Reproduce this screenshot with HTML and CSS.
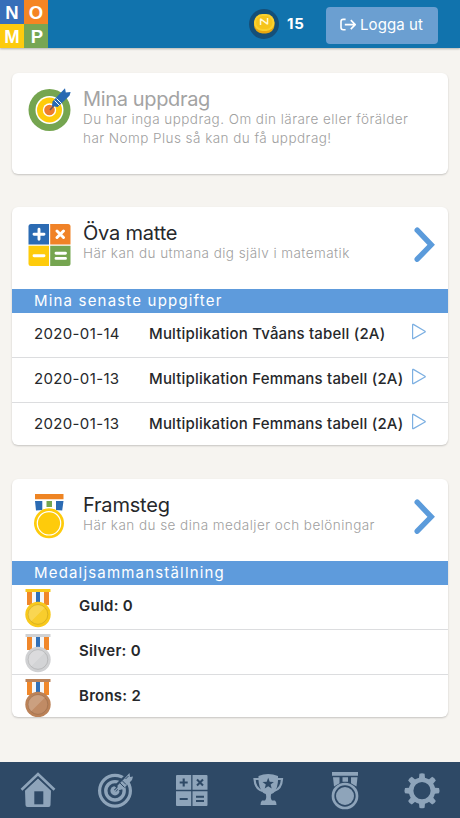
FILE: index.html
```html
<!DOCTYPE html>
<html lang="sv">
<head>
<meta charset="utf-8">
<title>Nomp</title>
<link rel="stylesheet" href="styles.css">
</head>
<body>
<svg width="0" height="0" class="defs">
  <defs>
    <symbol id="chevron" viewBox="0 0 22 36"><path d="M3.2 3.2 17.2 17.8 3.2 32.2" fill="none" stroke="#5b9bdb" stroke-width="5.4" stroke-linecap="round"/></symbol>
    <symbol id="play" viewBox="0 0 16 18"><path d="M1.6 1.8v13.4q0 .8.8.4L14 9.1q.6-.4 0-.8L2.4 1.4q-.8-.4-.8.4z" fill="none" stroke="#7db0e2" stroke-width="1.2"/></symbol>
    <symbol id="medal" viewBox="0 0 28 40">
      <path d="M3 4h7v13H3zM18 4h7v13h-7z" fill="#f0872a"/>
      <path d="M8 4h12v13H8z" fill="#f4f6f8"/>
      <path d="M12 4h4v12h-4z" fill="#2f6fb7"/>
      <path d="M1.500 1h25v3h-25z" fill="currentColor"/>
      <circle cx="14" cy="26.500" r="12.700" fill="currentColor"/>
      <circle cx="14" cy="26.500" r="9.800" fill="#fff" fill-opacity=".08" stroke="#000" stroke-opacity=".12"/>
      <path d="M7 33.500A9.800 9.800 0 0 1 21 19.600z" fill="#fff" fill-opacity=".18"/>
    </symbol>
  </defs>
</svg>
<div class="app">
  <header class="topbar">
    <div class="logo"><span class="blue">N</span><span class="orange">O</span><span class="yellow">M</span><span class="green">P</span></div>
    <svg class="coin" viewBox="0 0 32 32"><circle cx="16" cy="16" r="15" fill="#154f78"/><rect x="6" y="7" width="20.5" height="18.5" rx="8.5" fill="#e9a70f"/><rect x="6" y="6" width="20.5" height="17" rx="8.3" fill="#fbd12e"/><rect x="8" y="8" width="16.5" height="13" rx="6.5" fill="#f6c41b"/><path d="M12.500 17v-6.200l7 5.400V10" fill="none" stroke="#fff8d2" stroke-width="1.500" stroke-linejoin="bevel"/></svg>
    <span class="coins">15</span>
    <button class="logout"><svg viewBox="0 0 16 14"><path d="M5.6 1.4H3.2Q1 1.400 1 3.600v6q0 2.200 2.200 2.200h2.400M4.800 6.600H15M10.800 2.100 15.200 6.600l-4.400 4.500" fill="none" stroke="#fff" stroke-width="1.600"/></svg><span>Logga ut</span></button>
  </header>

  <main>
    <section class="card tasks">
      <div class="head">
        <svg class="icon" viewBox="0 0 44 44"><circle cx="21.500" cy="23" r="21" fill="#75a550"/><circle cx="21.500" cy="23" r="14" fill="#fff"/><circle cx="21.500" cy="23" r="12.500" fill="#fecb0b"/><circle cx="21.500" cy="23" r="6.700" fill="#fff"/><circle cx="21.500" cy="23" r="5.300" fill="#ee7d2b"/><path d="m22 23 7-8" stroke="#6d5660" stroke-width="1.500"/><path d="m24 19 .5-4.500L32 6.500l5-5.200.8 4.200 4.800-.5-1 3.500-4 4-8 7.500z" fill="#2869b2"/><path d="m26.500 13.500 5 5M28.500 11.500l5 5" stroke="#fff" stroke-width="1"/></svg>
        <div><h2>Mina uppdrag</h2><p>Du har inga uppdrag. Om din lärare eller förälder<br>har Nomp Plus så kan du få uppdrag!</p></div>
      </div>
    </section>

    <section class="card">
      <div class="head">
        <svg class="icon" viewBox="0 0 44 44"><path d="M3 1h18v20.500H.500V3.500Q.500 1 3 1z" fill="#2b6bb3"/><path d="M22.200 1H40q2.500 0 2.500 2.500v18H22.200z" fill="#f08227"/><path d="M.500 22.700H21v20.200H3q-2.500 0-2.500-2.500z" fill="#fecb0b"/><path d="M22.200 22.700h20.300v17.700q0 2.500-2.500 2.500H22.200z" fill="#75a550"/><path d="M6 11.200h10M11 6.200v10M29 8l6.500 6.500M35.500 8 29 14.500M6 32.700h10M28 30.200h9.500M28 35.400h9.500" fill="none" stroke="#fff" stroke-width="2.900" stroke-linecap="round"/></svg>
        <div><h2>Öva matte</h2><p>Här kan du utmana dig själv i matematik</p></div>
        <svg class="chev"><use href="#chevron"/></svg>
      </div>
      <h3>Mina senaste uppgifter</h3>
      <ul>
        <li><span class="date">2020-01-14</span><span class="name">Multiplikation Tvåans tabell (2A)</span><svg class="play"><use href="#play"/></svg></li>
        <li><span class="date">2020-01-13</span><span class="name">Multiplikation Femmans tabell (2A)</span><svg class="play"><use href="#play"/></svg></li>
        <li><span class="date">2020-01-13</span><span class="name">Multiplikation Femmans tabell (2A)</span><svg class="play"><use href="#play"/></svg></li>
      </ul>
    </section>

    <section class="card">
      <div class="head">
        <svg class="icon" viewBox="0 0 44 46"><path d="M7 0h28.500v5.200H7z" fill="#ee8423"/><path d="M7 7h7.300v9L8 16.500zM28 7h7.500l-1.300 9.500L28 16z" fill="#2b6bb3"/><path d="M18.500 7H24v6h-5.500z" fill="#75a550"/><circle cx="21" cy="29.300" r="15" fill="#fecb0b"/><circle cx="21" cy="29.300" r="11.700" fill="none" stroke="#fff" stroke-width="1.200"/></svg>
        <div><h2>Framsteg</h2><p>Här kan du se dina medaljer och belöningar</p></div>
        <svg class="chev"><use href="#chevron"/></svg>
      </div>
      <h3>Medaljsammanställning</h3>
      <ul class="medals">
        <li><svg class="gold"><use href="#medal"/></svg><b>Guld: 0</b></li>
        <li><svg class="silver"><use href="#medal"/></svg><b>Silver: 0</b></li>
        <li><svg class="bronze"><use href="#medal"/></svg><b>Brons: 2</b></li>
      </ul>
    </section>
  </main>

  <nav class="tabs">
    <svg viewBox="0 0 36 36"><path d="M5 18.500 18 6.500l13 12-.5 14.500q0 2-2 2h-21q-2 0-2-2z" fill="#8ea4ba"/><path d="M1.500 18.500 18 2.500l16.500 16" fill="none" stroke="#2e4966" stroke-width="5"/><path d="M1.500 17.800 18 2l16.500 15.800" fill="none" stroke="#8ea4ba" stroke-width="2.600"/><path d="M14.300 19.300h9v13h-9z" fill="#2e4966"/></svg>
    <svg viewBox="0 0 36 36"><g fill="none" stroke="#8ea4ba"><circle cx="18" cy="18.800" r="15.400" stroke-width="3.200"/><circle cx="18" cy="18.800" r="9.200" stroke-width="3.400"/></g><circle cx="18" cy="18.800" r="4.600" fill="#8ea4ba"/><path d="m20 16.500 10-10" stroke="#2e4966" stroke-width="8"/><path d="m18 18.800 6-6" stroke="#2e4966" stroke-width="2.800"/><path d="m18 18.800 6-6" stroke="#8ea4ba" stroke-width="1.200"/><path d="m20.500 13.500 7-7 5-5.500.5 4 3-.5-1 3.500-9 9-5 1.500z" fill="#8ea4ba"/><path d="m22.500 10.500 5 5M25 8.500l4 4M28.500 7l3-3" stroke="#2e4966" stroke-width="1"/></svg>
    <svg viewBox="0 0 36 36"><path d="M3 3H17.200v14.800H2V4q0-1 1-1zM18.500 3h14q1 0 1 1v13.800h-15zM2 19.200h15.200V34H3q-1 0-1-1zM18.500 19.200h15V33q0 1-1 1h-14z" fill="#8ea4ba"/><path d="M5.700 10.500h8M9.700 6.500v8M23 7.500l6 6M29 7.500l-6 6M5.700 27h8M22 24.800h8M22 29h8" stroke="#2e4966" stroke-width="2.100"/></svg>
    <svg viewBox="0 0 36 36"><path d="M8.500 4Q18 0 28 4q.5 8-2 13.500-2 4-4.800 4.500-1.200 4 .8 6.500h3q1.500 1 1.500 4.500H10.500q0-3.500 1.500-4.500h3q2-2.500.8-6.500-3-.5-5-4.500Q8 12 8.500 4z" fill="#8ea4ba"/><path d="M9 7H4.500q.5 10 8 12M27.500 7H32q-.5 10-8 12" fill="none" stroke="#8ea4ba" stroke-width="2.200"/><path d="m18.200 5.800 1.500 3.900 4.200.2-3.300 2.600 1.100 4.100-3.500-2.300-3.500 2.300 1.100-4.100-3.300-2.600 4.200-.2z" fill="#2e4966"/></svg>
    <svg viewBox="0 0 36 36"><path d="M5 0h26v3.800H5zM6 5.300h6.500v6L7 14.500zM15.500 5.300h5.500v4.500h-5.500zM24 5.300h6.500L29.500 14.500 24 11.300z" fill="#8ea4ba"/><circle cx="18" cy="24" r="12" fill="none" stroke="#8ea4ba" stroke-width="2.700"/><circle cx="18" cy="24" r="9" fill="#8ea4ba"/></svg>
    <svg viewBox="0 0 36 36"><defs><path id="tooth" d="m12 8.500 3-2.500.4-4.300q2.600-1 5.200 0L21 6l3 2.500z"/></defs><g fill="#8ea4ba"><circle cx="18" cy="18.700" r="10.900" fill="none" stroke="#8ea4ba" stroke-width="4.600"/><use href="#tooth"/><use href="#tooth" transform="rotate(45 18 18.700)"/><use href="#tooth" transform="rotate(90 18 18.700)"/><use href="#tooth" transform="rotate(135 18 18.700)"/><use href="#tooth" transform="rotate(180 18 18.700)"/><use href="#tooth" transform="rotate(225 18 18.700)"/><use href="#tooth" transform="rotate(270 18 18.700)"/><use href="#tooth" transform="rotate(315 18 18.700)"/></g></svg>
  </nav>
</div>
</body>
</html>
```
FILE: styles.css
```css
* { box-sizing: border-box; }
body { margin: 0; background: #f6f4f0; font-family: Inter, "Liberation Sans", sans-serif; color: #26282b; }
.defs { display: block; height: 0; }
svg { display: block; flex: none; }
h2, h3, p, ul { margin: 0; padding: 0; font-weight: 400; }
.app { height: 818px; display: flex; flex-direction: column; overflow: hidden; }
.topbar { height: 48px; background: #1173ad; display: flex; align-items: center; box-shadow: 0 1px 2px #0004; flex: none; }
.logo { width: 48px; height: 48px; display: grid; grid-template: 24px 24px / 24px 24px; color: #fff; font: 700 18.5px/25px "Liberation Sans", sans-serif; text-align: center; margin-right: 200px; }
.blue { background: #376fb9; }
.orange { background: #f58523; }
.yellow { background: #fdcb0e; }
.green { background: #77a653; padding-left: 2px; }
.coin { width: 32px; height: 32px; }
.coins { color: #fff; font-size: 15px; font-weight: 700; line-height: 20px; width: 39px; margin-left: 7px; letter-spacing: .9px; }
.logout { width: 112px; height: 37px; margin-top: 2px; border: 0; border-radius: 4px; background: #6b9fd1; color: #fff; font: 400 15px Inter, sans-serif; padding: 0 0 1px 14px; display: flex; align-items: center; gap: 4px; white-space: nowrap; letter-spacing: .1px; }
.logout svg { width: 16px; height: 14px; }
main { flex: 1; padding: 25px 12px 0; }
.card { background: #fff; border-radius: 6px; box-shadow: 0 1px 2px #0003; margin-bottom: 34px; height: 238px; overflow: hidden; }
.tasks { height: 101px; margin-bottom: 33px; }
.head { height: 82px; padding: 16px 12px 0 16px; display: flex; }
.head > div { flex: 1; margin-left: 11px; white-space: nowrap; }
.icon { width: 44px; height: 44px; }
.tasks .icon { margin-top: -2px; }
.card:last-child .icon { height: 46px; margin-top: -1px; }
h2 { font-size: 20px; line-height: 21px; letter-spacing: -.2px; }
.tasks h2 { color: #a3a3a3; letter-spacing: -.35px; }
p { font-size: 13.5px; line-height: 19px; font-weight: 300; color: #a0a0a0; letter-spacing: .45px; }
.chev { width: 22px; height: 36px; margin-top: 4px; }
h3 { height: 23.5px; background: #5e9bdc; color: #fff; font-size: 15px; line-height: 23px; padding-left: 22px; letter-spacing: 1.18px; }
ul { list-style: none; }
li { height: 45px; border-bottom: 1px solid #dcdddf; display: flex; align-items: center; white-space: nowrap; padding-left: 22px; font-size: 15px; }
li:last-child { border: 0; height: 43.5px; }
li span, li b { position: relative; top: -1px; }
.date { width: 115px; letter-spacing: .35px; }
.name { width: 262px; font-weight: 500; letter-spacing: .19px; }
.play { width: 16px; height: 18px; margin-top: -5px; }
.medals li { padding-left: 12px; }
.medals svg { width: 28px; height: 40px; margin-top: 3px; }
.medals b { margin-left: 27px; font-weight: 600; letter-spacing: .25px; }
.gold { color: #f8c91c; }
.silver { color: #d0d1d3; }
.bronze { color: #bb8258; }
.tabs { height: 56px; flex: none; background: #2e4966; display: flex; justify-content: space-around; align-items: center; }
.tabs svg { width: 36px; height: 36px; overflow: visible; }
```
